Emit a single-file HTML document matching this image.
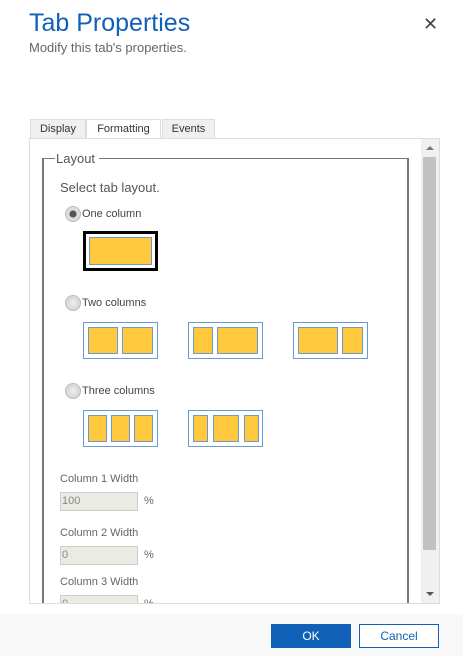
<!DOCTYPE html>
<html><head><style>
*{margin:0;padding:0;box-sizing:border-box}
body{width:463px;height:656px;background:#fff;font-family:"Liberation Sans",sans-serif;position:relative;overflow:hidden;color:#444}
.a{position:absolute}
.title{left:29px;top:9px;font-size:25px;color:#1160b7}
.sub{left:29px;top:40px;font-size:13px;color:#666}
.x{left:423px;top:14px;font-size:18px;color:#444}
.tab{top:119px;height:20px;border:1px solid #ddd;border-bottom:none;background:#f0f0f0;font-size:11px;color:#333;text-align:center;line-height:18px}
.box{left:29px;top:138px;width:411px;height:466px;border:1px solid #ddd;overflow:hidden}
.fs{left:42px;top:158px;width:367px;height:460px;border:2px solid #777;border-top:1px solid #777;border-left-width:2px}
.leg{left:55px;top:151px;background:#fff;padding:0 4px 0 1px;font-size:13px;color:#555}
.lbl{font-size:13px;color:#555}
.radio{width:16px;height:16px;border-radius:50%;border:1px solid #bbb;background:radial-gradient(#eee,#ccc)}
.rt{font-size:11px;color:#444}
.lay{border:1px solid #6a9bd0;background:#fff}
.c{position:absolute;top:4px;bottom:4px;background:#ffc83d;border:1px solid #6a9bd0}
.inp{width:78px;height:19px;border:1px solid #ccc;background:#ebebe4;font-size:11px;color:#888;padding:2px 1px}
.f{font-size:11px;color:#666}
</style></head><body>
<div class="a title">Tab Properties</div>
<div class="a sub">Modify this tab's properties.</div>
<div class="a x">✕</div>
<div class="a tab" style="left:30px;width:56px">Display</div>
<div class="a tab" style="left:86px;width:75px;background:#fff;height:20px">Formatting</div>
<div class="a tab" style="left:162px;width:53px">Events</div>
<div class="a box"></div>
<div class="a" style="left:421px;top:139px;width:18px;height:464px;background:#f0f0f0"></div>
<div class="a" style="left:423px;top:157px;width:13px;height:393px;background:#c1c1c1"></div>
<div class="a" style="left:426px;top:146px;width:0;height:0;border:4px solid transparent;border-bottom:4px solid #777;border-top:none"></div>
<div class="a" style="left:426px;top:592px;width:0;height:0;border:4px solid transparent;border-top:4px solid #555;border-bottom:none"></div>
<div class="a" style="left:30px;top:139px;width:390px;height:464px;overflow:hidden">
<div class="a fs" style="left:12px;top:19px"></div>
<div class="a leg" style="left:25px;top:12px">Layout</div>
<div class="a lbl" style="left:30px;top:41px">Select tab layout.</div>
<div class="a radio" style="left:35px;top:67px;background:radial-gradient(#555 0 3px,#ddd 4px)"></div>
<div class="a rt" style="left:52px;top:69px">One column</div>
<div class="a" style="left:53px;top:92px;width:75px;height:40px;border:3px solid #000"></div>
<div class="a" style="left:59px;top:98px;width:63px;height:28px;background:#ffc83d;border:1px solid #6a9bd0"></div>
<div class="a radio" style="left:35px;top:156px"></div>
<div class="a rt" style="left:52px;top:158px">Two columns</div>
<div class="a lay" style="left:53px;top:183px;width:75px;height:37px"><div class="c" style="left:4px;width:30px"></div><div class="c" style="left:38px;width:31px"></div></div>
<div class="a lay" style="left:158px;top:183px;width:75px;height:37px"><div class="c" style="left:4px;width:20px"></div><div class="c" style="left:28px;width:41px"></div></div>
<div class="a lay" style="left:263px;top:183px;width:75px;height:37px"><div class="c" style="left:4px;width:40px"></div><div class="c" style="left:48px;width:21px"></div></div>
<div class="a radio" style="left:35px;top:244px"></div>
<div class="a rt" style="left:52px;top:246px">Three columns</div>
<div class="a lay" style="left:53px;top:271px;width:75px;height:37px"><div class="c" style="left:4px;width:19px"></div><div class="c" style="left:27px;width:19px"></div><div class="c" style="left:50px;width:19px"></div></div>
<div class="a lay" style="left:158px;top:271px;width:75px;height:37px"><div class="c" style="left:4px;width:15px"></div><div class="c" style="left:24px;width:26px"></div><div class="c" style="left:55px;width:15px"></div></div>
<div class="a f" style="left:30px;top:334px">Column 1 Width</div>
<div class="a inp" style="left:30px;top:353px">100</div><div class="a f" style="left:114px;top:356px">%</div>
<div class="a f" style="left:30px;top:388px">Column 2 Width</div>
<div class="a inp" style="left:30px;top:407px">0</div><div class="a f" style="left:114px;top:410px">%</div>
<div class="a f" style="left:30px;top:437px">Column 3 Width</div>
<div class="a inp" style="left:30px;top:456px">0</div><div class="a f" style="left:114px;top:459px">%</div>
</div>
<div class="a" style="left:0;top:614px;width:463px;height:42px;background:#f8f8f8"></div>
<div class="a" style="left:271px;top:624px;width:80px;height:24px;background:#1160b7;color:#fff;font-size:12px;text-align:center;line-height:24px">OK</div>
<div class="a" style="left:359px;top:624px;width:80px;height:24px;background:#fff;border:1px solid #1160b7;color:#1160b7;font-size:12px;text-align:center;line-height:22px">Cancel</div>
</body></html>
